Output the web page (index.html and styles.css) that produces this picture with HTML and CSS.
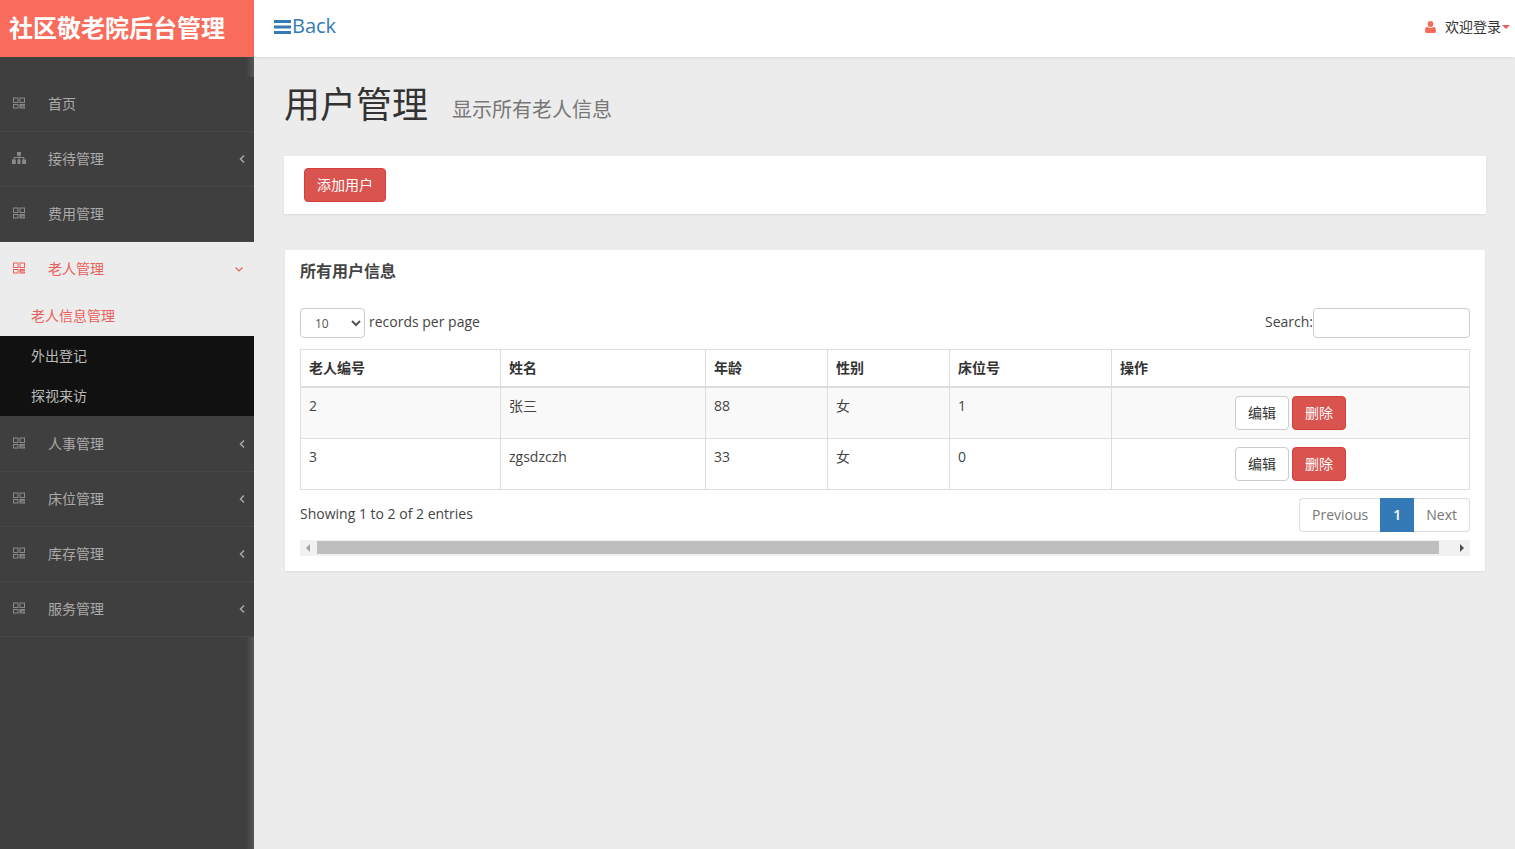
FILE: index.html
```html
<!DOCTYPE html>
<html lang="zh">
<head>
<meta charset="utf-8">
<title>社区敬老院后台管理</title>
<link rel="stylesheet" href="styles.css">
</head>
<body>
<div class="app">
  <aside class="sidebar">
    <div class="logo">社区敬老院后台管理</div>
    <nav class="menu">
      <a class="item"><svg class="ico" viewBox="0 0 12 12"><use href="#qr"/></svg><span class="lbl">首页</span></a>
      <a class="item"><svg class="ico tree" viewBox="0 0 14 12"><path d="M5 0h4v3.500H7.500V5h4.800v2.500H14V12h-3.800V7.500h1.100V6H7.500v1.500h1V12h-3V7.500h1V6H2.700v1.500h1.100V12H0V7.500h1.700V5h4.800V3.500H5z" fill="currentColor"/></svg><span class="lbl">接待管理</span><svg class="chev" viewBox="0 0 8 10"><path d="M6 1.500 2.500 5 6 8.500" fill="none" stroke="currentColor" stroke-width="1.500"/></svg></a>
      <a class="item"><svg class="ico" viewBox="0 0 12 12"><use href="#qr"/></svg><span class="lbl">费用管理</span></a>
      <a class="item active"><svg class="ico" viewBox="0 0 12 12"><use href="#qr"/></svg><span class="lbl">老人管理</span><svg class="chev down" viewBox="0 0 10 8"><path d="M1.500 2.500 5 6l3.500-3.500" fill="none" stroke="currentColor" stroke-width="1.200"/></svg></a>
      <a class="sub current">老人信息管理</a>
      <div class="subs">
        <a class="sub">外出登记</a>
        <a class="sub">探视来访</a>
      </div>
      <a class="item"><svg class="ico" viewBox="0 0 12 12"><use href="#qr"/></svg><span class="lbl">人事管理</span><svg class="chev" viewBox="0 0 8 10"><path d="M6 1.500 2.500 5 6 8.500" fill="none" stroke="currentColor" stroke-width="1.500"/></svg></a>
      <a class="item"><svg class="ico" viewBox="0 0 12 12"><use href="#qr"/></svg><span class="lbl">床位管理</span><svg class="chev" viewBox="0 0 8 10"><path d="M6 1.500 2.500 5 6 8.500" fill="none" stroke="currentColor" stroke-width="1.500"/></svg></a>
      <a class="item"><svg class="ico" viewBox="0 0 12 12"><use href="#qr"/></svg><span class="lbl">库存管理</span><svg class="chev" viewBox="0 0 8 10"><path d="M6 1.500 2.500 5 6 8.500" fill="none" stroke="currentColor" stroke-width="1.500"/></svg></a>
      <a class="item"><svg class="ico" viewBox="0 0 12 12"><use href="#qr"/></svg><span class="lbl">服务管理</span><svg class="chev" viewBox="0 0 8 10"><path d="M6 1.500 2.500 5 6 8.500" fill="none" stroke="currentColor" stroke-width="1.500"/></svg></a>
    </nav>
  </aside>
  <div class="right">
    <header class="topbar">
      <a class="back"><svg class="bars" viewBox="0 0 17 14"><path d="M0 0h17v3H0zM0 5.500h17v3H0zM0 11h17v3H0z" fill="currentColor"/></svg>Back</a>
      <div class="user">
        <svg class="uico" viewBox="0 0 12 13"><path d="M6 0a3 3 0 0 1 3 3.200A3 3 0 0 1 6 6.500a3 3 0 0 1-3-3.300A3 3 0 0 1 6 0zM2.300 6.200C3.200 7 4.500 7.500 6 7.500s2.800-.5 3.700-1.300C11.200 6.500 12 8 12 10.500c0 1.500-1 2.500-2.300 2.500H2.300C1 13 0 12 0 10.500 0 8 .8 6.500 2.300 6.200z" fill="currentColor"/></svg>
        <span class="uname">欢迎登录</span><span class="caret"></span>
      </div>
    </header>
    <main class="content">
      <div class="head"><h1>用户管理</h1><small>显示所有老人信息</small></div>
      <section class="card bar"><button class="btn danger">添加用户</button></section>
      <section class="card box">
        <h3>所有用户信息</h3>
        <div class="controls">
          <div class="len"><select class="sel"><option>10</option></select><span>records per page</span></div>
          <label class="search"><span>Search:</span><input class="inp" type="text"></label>
        </div>
        <table class="tbl">
          <colgroup><col class="c1"><col class="c2"><col class="c3"><col class="c4"><col class="c5"><col></colgroup>
          <thead><tr><th>老人编号</th><th>姓名</th><th>年龄</th><th>性别</th><th>床位号</th><th>操作</th></tr></thead>
          <tbody>
            <tr class="odd"><td>2</td><td>张三</td><td>88</td><td>女</td><td>1</td><td class="acts"><button class="btn plain">编辑</button><button class="btn danger">删除</button></td></tr>
            <tr><td>3</td><td>zgsdzczh</td><td>33</td><td>女</td><td>0</td><td class="acts"><button class="btn plain">编辑</button><button class="btn danger">删除</button></td></tr>
          </tbody>
        </table>
        <div class="foot">
          <div class="info">Showing 1 to 2 of 2 entries</div>
          <div class="pager"><a class="pg first">Previous</a><a class="pg on">1</a><a class="pg last">Next</a></div>
        </div>
        <div class="hscroll">
          <span class="arrow l"></span>
          <span class="thumb"></span>
          <span class="arrow r"></span>
        </div>
      </section>
    </main>
  </div>
</div>
<svg class="defs" width="0" height="0"><defs><g id="qr" fill="currentColor"><path fill-rule="evenodd" d="M0 .5h5.500V6H0zm1 1V5h3.500V1.500zM6.500 .5H12V6H6.500zm1 1V5H11V1.500zM0 7h5.500v4.500H0zm1 1v2.500h3.500V8zM6.500 7H12v1.800H8V9.500h4v2H6.500v-1H11V10.300H6.500z"/></g></defs></svg>
</body>
</html>
```
FILE: styles.css
```css
* { box-sizing: border-box; }
html, body { margin: 0; height: 100%; }
body {
  font-family: "Open Sans", "Noto Sans CJK SC", sans-serif;
  font-size: 14px;
  line-height: 20px;
  color: #444;
  background: #ececec;
  overflow: hidden;
}
.defs { position: absolute; }
.app { display: flex; height: 849px; }
.sidebar { width: 254px; flex: none; background: #3f3f3f; display: flex; flex-direction: column; }
.logo {
  height: 57px; background: #f96b5b; color: #fff;
  font-size: 24px; font-weight: 700; line-height: 55px; padding-left: 9px; white-space: nowrap;
}
.menu {
  flex: 1; padding-top: 20px;
  background: linear-gradient(90deg, #3f3f3f 246px, #565656 254px);
  font-family: "Noto Sans CJK SC", sans-serif;
  font-size: 14px;
}
.item {
  display: flex; align-items: center; height: 55px; color: #aaa; padding-left: 13px; background: #3f3f3f;
  border-bottom: 1px solid #474747; position: relative; font-weight: 400;
}
.ico { width: 12px; height: 12px; color: #8a8a8a; flex: none; margin-top: -2px; }
.tree { width: 14px; margin-left: -1px; margin-right: -1px; }
.lbl { margin-left: 23px; margin-top: -2px; }
.chev { width: 8px; height: 10px; position: absolute; right: 8px; top: 22px; color: #aaa; }
.item.active { background: #ececec; color: #e9605a; border-bottom: 0; height: 54px; }
.item.active .ico { color: #e9605a; }
.chev.down { width: 10px; height: 8px; right: 10px; top: 23px; color: #e9605a; }
.subs + .item { height: 56px; }
.subs + .item .chev { top: 23px; }
.sub { display: block; height: 40px; line-height: 38px; padding-left: 31px; color: #bbb; }
.sub.current { color: #e9605a; background: #ececec; }
.subs { background: #111; }
.right { flex: 1; min-width: 0; display: flex; flex-direction: column; }
.topbar {
  height: 57px; background: #fff; display: flex; align-items: center; justify-content: space-between;
  padding-left: 20px; box-shadow: 0 1px 3px rgba(0,0,0,.08); position: relative;
}
.back { color: #337ab7; font-size: 20px; line-height: 26px; display: flex; align-items: center; margin-top: -5px; }
.bars { width: 17px; height: 14px; margin-top: 2px; margin-right: 1px; }
.user { display: flex; align-items: center; font-family: "Noto Sans CJK SC", sans-serif; font-size: 14px; color: #333; padding-right: 5px; margin-top: -4px; }
.uico { width: 11px; height: 12px; color: #f96b5b; margin-right: 9px; }
.uname { width: 57px; margin-top: -2px; }
.caret { width: 0; height: 0; border: 4px solid transparent; border-top-color: #e9605a; border-bottom: 0; }
.content { padding: 0 29px 0 30px; flex: 1; }
.head { height: 99px; display: flex; align-items: flex-start; padding-top: 20px; }
h1 { margin: 0; font: 400 36px/50px "Noto Sans CJK SC", sans-serif; color: #333; }
small { font: 400 20px/28px "Noto Sans CJK SC", sans-serif; color: #777; margin: 18px 0 0 24px; }
.card { background: #fff; box-shadow: 0 1px 2px rgba(0,0,0,.07); }
.bar { height: 58px; padding: 12px 20px; margin-bottom: 36px; }
.box { margin: 0 1px; height: 321px; padding: 10px 15px 0; }
.btn {
  font-family: "Noto Sans CJK SC", sans-serif; font-size: 14px; height: 34px; padding: 0 12px 2px;
  border-radius: 4px; border: 1px solid; cursor: pointer; line-height: 20px;
}
.danger { background: #d9534f; border-color: #d43f3a; color: #fff; }
.plain { background: #fff; border-color: #ccc; color: #333; margin-right: 3px; }
h3 { margin: 0; font: 700 16px/20px "Noto Sans CJK SC", sans-serif; color: #444; }
.controls { display: flex; justify-content: space-between; align-items: center; margin-top: 28px; height: 30px; }
.len { display: flex; align-items: center; gap: 4px; }
.sel {
  width: 65px; height: 30px; border: 1px solid #ccc; border-radius: 4px; background: #fff;
  font: 12px "Open Sans", sans-serif; color: #555; padding: 0 10px;
}
.len span { margin-bottom: 2px; }
.search { display: flex; align-items: center; }
.search span { margin-bottom: 2px; }
.inp { width: 157px; height: 30px; border: 1px solid #ccc; border-radius: 4px; background: #fff; }
.tbl { width: 1170px; margin-top: 11px; border-collapse: collapse; table-layout: fixed; border: 1px solid #ddd; }
.c1 { width: 200px; } .c2 { width: 205px; } .c3 { width: 122px; } .c4 { width: 122px; } .c5 { width: 162px; }
.tbl th, .tbl td { border: 1px solid #ddd; padding: 8px; text-align: left; vertical-align: top; }
.tbl th { font-family: "Noto Sans CJK SC", sans-serif; font-size: 14px; font-weight: 700; color: #333; border-bottom-width: 2px; padding: 7px 8px 9px; }
.odd td { background: #f9f9f9; }
.tbl td.acts { text-align: center; font-size: 0; }
.foot { display: flex; justify-content: space-between; margin-top: 8px; }
.info { padding-top: 6px; }
.pager { display: flex; height: 34px; }
.pg { border: 1px solid #ddd; border-left-width: 0; padding: 6px 12px; color: #777; line-height: 20px; }
.first { border-left-width: 1px; border-right-width: 0; border-radius: 4px 0 0 4px; }
.last { border-radius: 0 4px 4px 0; }
.on { background: #337ab7; border-color: #337ab7; border-left-width: 1px; color: #fff; font-weight: 600; }
.hscroll { margin-top: 8px; height: 16px; background: #f1f1f1; display: flex; align-items: center; }
.thumb { flex: none; width: 1122px; height: 13px; background: #bebebe; margin: 0 0 1px 7px; }
.arrow { width: 0; height: 0; border: 4px solid transparent; flex: none; }
.arrow.l { border-right-color: #a3a3a3; border-left: 0; margin-left: 6px; }
.arrow.r { border-left-color: #505050; border-right: 0; margin-left: 21px; }
```
